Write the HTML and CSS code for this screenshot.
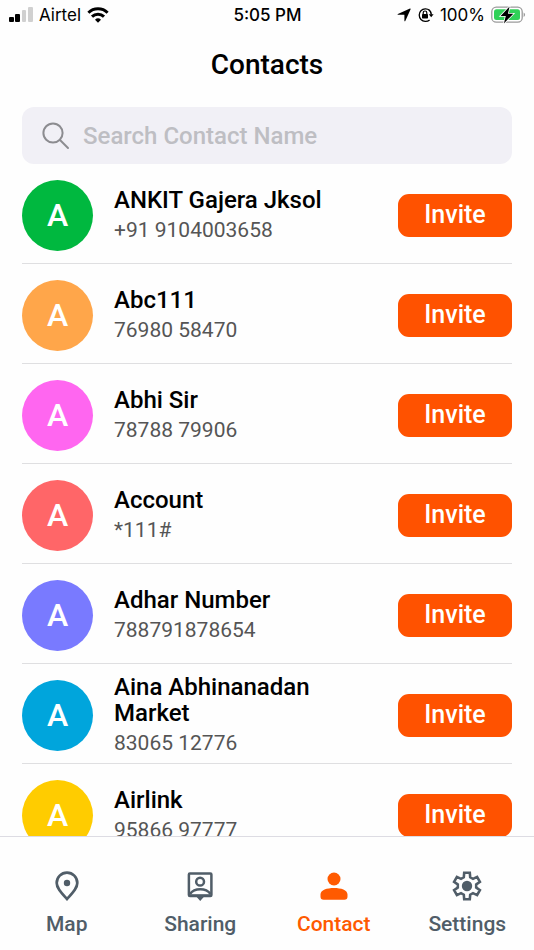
FILE: index.html
```html
<!DOCTYPE html>
<html lang="en">
<head>
<meta charset="utf-8">
<meta name="viewport" content="width=device-width, initial-scale=1">
<title>Contacts</title>
<link rel="stylesheet" href="styles.css">
</head>
<body>
<div class="status">
  <div class="status-side">
    <svg width="24" height="16" viewBox="0 0 24 16" aria-hidden="true"><rect y="10" width="5" height="5" rx="1"/><rect x="6" y="7" width="5" height="8" rx="1"/><g fill="#d0d0d0"><rect x="13" y="3" width="4" height="12" rx="1"/><rect x="19" y="0" width="5" height="15" rx="1"/></g></svg>
    <span class="carrier">Airtel</span>
    <svg width="22" height="16" viewBox="0 0 22 16" aria-hidden="true"><g fill="none" stroke="#000" stroke-width="3"><path d="M1.400 5.700a13.700 13.700 0 0 1 19.200 0"/><path d="M5 9.600a8.600 8.600 0 0 1 12 0"/></g><path d="M11 15.800l-3-3.100a4.300 4.300 0 0 1 6 0z"/></svg>
  </div>
  <time class="time">5:05 PM</time>
  <div class="status-side status-end">
    <svg width="14" height="14" viewBox="0 0 14 14" aria-hidden="true"><path d="M13 .6c.4-.2.8.2.6.7L8.300 13c-.2.5-.9.4-.9-.1V7.100c0-.2-.1-.3-.3-.3H1C.5 6.800.4 6.200.9 6z"/></svg>
    <svg width="17" height="16" viewBox="0 0 17 16" aria-hidden="true"><path d="M12.600 3.300A6.300 6.300 0 1 0 12.600 12.900M11.600 2.600a6.300 6.300 0 0 1 2.700 5.200" fill="none" stroke="#000" stroke-width="1.300"/><path d="M11.800 7.300h4.800l-2.400 3z"/><rect x="5" y="7" width="6" height="4.400" rx=".7"/><path d="M6.200 7.200V5.800a1.800 1.800 0 0 1 3.600 0v1.400" fill="none" stroke="#000" stroke-width="1.200"/></svg>
    <span>100%</span>
    <svg width="35" height="18" viewBox="0 0 35 18" aria-hidden="true"><rect x=".8" y="1.200" width="30.400" height="15" rx="4.500" fill="#fff" stroke="#9b9b9b" stroke-width="1.300"/><rect x="3" y="3.300" width="26" height="10.800" rx="2.500" fill="#30d158"/><path d="M32.600 6.500c2 .8 2 3.600 0 4.400z" fill="#9b9b9b"/><path d="M18.600.5L9.600 10h5.200l-1.900 7.400L22.300 7.700h-5.400z" stroke="#fff" stroke-width="1.600" paint-order="stroke"/></svg>
  </div>
</div>
<header class="header"><h1>Contacts</h1></header>
<main class="main">
  <label class="search">
    <svg width="28" height="28" viewBox="0 0 28 28" fill="none" stroke="#8c8c90" stroke-width="2" stroke-linecap="round" aria-hidden="true"><circle cx="11" cy="11" r="9.600"/><path d="M18 18l8 8"/></svg>
    <input type="search" placeholder="Search Contact Name" aria-label="Search Contact Name">
  </label>
  <ul class="list">
    <li class="row"><span class="avatar green">A</span><div class="info"><h2>ANKIT Gajera Jksol</h2><p>+91 9104003658</p></div><button class="invite" type="button">Invite</button></li>
    <li class="row"><span class="avatar orange">A</span><div class="info"><h2>Abc111</h2><p>76980 58470</p></div><button class="invite" type="button">Invite</button></li>
    <li class="row"><span class="avatar pink">A</span><div class="info"><h2>Abhi Sir</h2><p>78788 79906</p></div><button class="invite" type="button">Invite</button></li>
    <li class="row"><span class="avatar coral">A</span><div class="info"><h2>Account</h2><p>*111#</p></div><button class="invite" type="button">Invite</button></li>
    <li class="row"><span class="avatar violet">A</span><div class="info"><h2>Adhar Number</h2><p>788791878654</p></div><button class="invite" type="button">Invite</button></li>
    <li class="row"><span class="avatar blue">A</span><div class="info"><h2>Aina Abhinanadan Market</h2><p>83065 12776</p></div><button class="invite" type="button">Invite</button></li>
    <li class="row"><span class="avatar yellow">A</span><div class="info"><h2>Airlink</h2><p>95866 97777</p></div><button class="invite" type="button">Invite</button></li>
  </ul>
</main>
<nav class="tabs">
  <a class="tab" href="#map"><svg width="32" height="32" viewBox="0 0 32 32" aria-hidden="true"><path d="M16 29C11 23.500 5.700 18.500 5.700 12.900a10.300 10.300 0 0 1 20.600 0C26.300 18.500 21 23.500 16 29z" fill="none" stroke="currentColor" stroke-width="2.700"/><circle cx="16" cy="13" r="3.200" fill="currentColor"/></svg><span>Map</span></a>
  <a class="tab" href="#sharing"><svg width="32" height="32" viewBox="0 0 32 32" aria-hidden="true"><g fill="none" stroke="currentColor" stroke-width="2.500"><rect x="4.900" y="3.600" width="22.500" height="22.500" rx="1"/><circle cx="16.100" cy="11.700" r="3.900"/><path d="M6 23.900c4.500-6.200 16-6.200 20.500 0"/></g><path d="M6 24.200h20.500v2.500H20L16.200 31 12.500 26.700H6z" fill="currentColor"/></svg><span>Sharing</span></a>
  <a class="tab active" href="#contact" aria-current="page"><svg width="32" height="32" viewBox="0 0 32 32" fill="currentColor" aria-hidden="true"><circle cx="16" cy="9" r="6.500"/><path d="M2.500 26.500v-2c0-4.500 6.500-6.500 13.500-6.500s13.500 2 13.500 6.500v2c0 2.200-1 3.200-3.200 3.200H5.700c-2.200 0-3.200-1-3.200-3.200z"/></svg><span>Contact</span></a>
  <a class="tab" href="#settings"><svg width="32" height="32" viewBox="0 0 32 32" aria-hidden="true"><path d="M13.200 2.700L18.800 2.700 19.200 7.300 22 8.900 26.100 6.900 28.900 11.800 25.200 14.400V17.600L28.900 20.200 26.100 25.100 22 23.100 19.200 24.700 18.800 29.300H13.200L12.800 24.700 10 23.100 5.900 25.100 3.100 20.200 6.800 17.600V14.400L3.100 11.800 5.900 6.900 10 8.900 12.800 7.300z" fill="none" stroke="currentColor" stroke-width="2.600"/><circle cx="16" cy="16" r="5.200" fill="currentColor"/></svg><span>Settings</span></a>
</nav>
</body>
</html>
```
FILE: styles.css
```css
* { box-sizing: border-box; }

body {
  margin: 0;
  height: 100vh;
  display: flex;
  flex-direction: column;
  background: #fefefe;
  color: #000;
  font-family: Roboto, "Liberation Sans", sans-serif;
  font-weight: 500;
}

h1, h2, p, ul { margin: 0; padding: 0; }

.status {
  display: grid;
  grid-template-columns: 1fr auto 1fr;
  align-items: center;
  height: 30px;
  padding: 0 8px 0 9px;
  font: 400 17px/20px Inter, sans-serif;
}
.status-side { display: flex; align-items: center; gap: 6px; }
.status-end { justify-content: flex-end; }
.time { font-weight: 500; }

.header {
  display: flex;
  align-items: center;
  justify-content: center;
  height: 70px;
  margin-bottom: 7px;
}
h1 { font-size: 28px; font-weight: 500; line-height: 32px; }

.main {
  flex: 1;
  min-height: 0;
  display: flex;
  flex-direction: column;
  padding: 0 22px;
}
.search {
  flex: none;
  display: flex;
  align-items: center;
  gap: 13px;
  height: 57px;
  padding: 0 20px;
  border-radius: 12px;
  background: #f1f0f6;
}
.search svg { flex: none; }
.search input {
  flex: 1;
  min-width: 0;
  padding: 0;
  border: 0;
  outline: 0;
  background: none;
  font: 500 24px/28px Roboto, sans-serif;
}
.search input::placeholder { color: #bebec3; opacity: 1; }

.list {
  flex: 1;
  min-height: 0;
  overflow-y: auto;
  scrollbar-width: none;
  list-style: none;
}
.row {
  display: flex;
  align-items: center;
  min-height: 100px;
  padding-top: 3px;
  border-bottom: 1px solid #dfdfe1;
}
.avatar {
  flex: none;
  display: grid;
  place-items: center;
  width: 71px;
  height: 71px;
  border-radius: 50%;
  color: #fff;
  font-size: 32px;
}
.green { background: #00b83f; }
.orange { background: #ffa64a; }
.pink { background: #ff66f0; }
.coral { background: #ff6668; }
.violet { background: #797aff; }
.blue { background: #00a5dc; }
.yellow { background: #ffcc00; }

.info { flex: 1; min-width: 0; padding: 0 21px; }
.info h2 { font-size: 24px; font-weight: 500; line-height: 26px; }
.info p {
  margin-top: 4px;
  color: #555;
  font-size: 21px;
  font-weight: 400;
  line-height: 26px;
}
.invite {
  flex: none;
  width: 114px;
  height: 43px;
  padding: 0;
  border: 0;
  border-radius: 11px;
  background: #ff5200;
  color: #fff;
  font: 500 25px/28px Roboto, sans-serif;
}

.tabs {
  flex: none;
  display: grid;
  grid-template-columns: repeat(4, 1fr);
  height: 114px;
  padding-top: 33px;
  border-top: 1px solid #dddce3;
}
.tab {
  display: flex;
  flex-direction: column;
  align-items: center;
  gap: 9px;
  color: #505d68;
  font-size: 21px;
  line-height: 26px;
  text-decoration: none;
}
.active { color: #ff5a00; }
```
